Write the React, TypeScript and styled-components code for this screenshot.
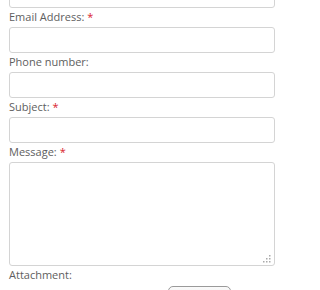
import React from "react";
import styled, { createGlobalStyle } from "styled-components";

const Global = createGlobalStyle`
  html, body { margin: 0; padding: 0; background: #fff; overflow: hidden; }
  body { font-family: "Open Sans", "Liberation Sans", sans-serif; }
`;

const Form = styled.form`
  display: flex;
  flex-direction: column;
  width: 266px;
  margin: -18px 0 0 9px;
`;

const Field = styled.div`
  display: flex;
  flex-direction: column;
`;

const Label = styled.label`
  font-size: 11px;
  line-height: 18px;
  color: #5e5e5e;
  margin-bottom: 1px;
`;

const Star = styled.span`
  color: #d9232d;
  margin-left: 3px;
`;

const Input = styled.input`
  box-sizing: border-box;
  height: 26px;
  width: 100%;
  margin: 0;
  border: 1px solid #d4d4d4;
  border-radius: 3px;
  background: #fff;
`;

const AreaWrap = styled.div`
  position: relative;
  height: 104px;
`;

const Area = styled.textarea`
  box-sizing: border-box;
  display: block;
  width: 100%;
  height: 100%;
  margin: 0;
  border: 1px solid #d4d4d4;
  border-radius: 3px;
  resize: none;
`;

const Grip = styled.svg`
  position: absolute;
  right: 4px;
  bottom: 3px;
`;

const FileRow = styled.div`
  display: flex;
  padding: 1px 0 0 159px;
`;

const FileButton = styled.button`
  width: 63px;
  height: 22px;
  border: 1px solid #9a9a9a;
  border-radius: 5px;
  background: linear-gradient(#fafafa, #e6e6e6);
`;

function TextField({ label, required }: { label: string; required?: boolean }) {
  return (
    <Field>
      <Label>
        {label}
        {required && <Star>*</Star>}
      </Label>
      <Input />
    </Field>
  );
}

export default function App() {
  return (
    <>
      <Global />
      <Form>
        <Field>
          <Input />
        </Field>
        <TextField label="Email Address:" required />
        <TextField label="Phone number:" />
        <TextField label="Subject:" required />
        <Field>
          <Label>
            Message:<Star>*</Star>
          </Label>
          <AreaWrap>
            <Area />
            <Grip width="10" height="10" viewBox="0 0 10 10">
              {[
                [8, 0],
                [8, 3],
                [8, 6],
                [5, 3],
                [5, 6],
                [2, 6],
              ].map(([x, y], i) => (
                <rect key={i} x={x} y={y + 2} width="1.5" height="1.5" fill="#aaa" />
              ))}
            </Grip>
          </AreaWrap>
        </Field>
        <Field>
          <Label>Attachment:</Label>
          <FileRow>
            <FileButton type="button" />
          </FileRow>
        </Field>
      </Form>
    </>
  );
}
